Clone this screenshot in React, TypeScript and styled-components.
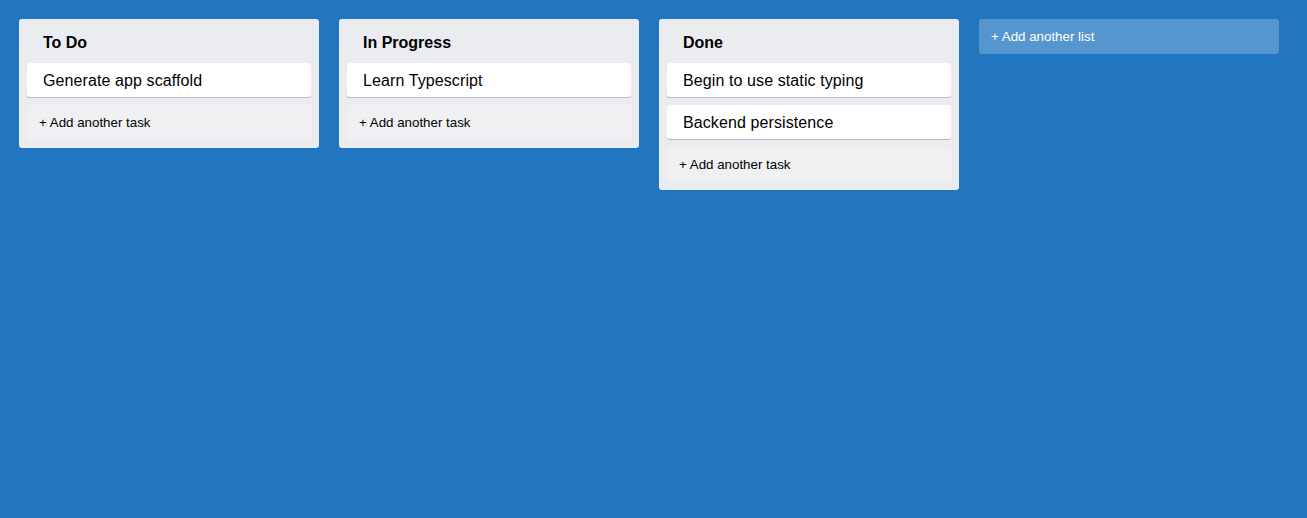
import React from "react";
import styled, { createGlobalStyle } from "styled-components";

const GlobalStyle = createGlobalStyle`
  html, body {
    margin: 0;
    padding: 0;
    height: 100%;
  }
  body {
    font-family: "Liberation Sans", Arial, Helvetica, sans-serif;
    -webkit-font-smoothing: antialiased;
    background: #2276bf;
  }
  #root {
    min-height: 100%;
  }
`;

const AppContainer = styled.div`
  display: flex;
  flex-direction: row;
  align-items: flex-start;
  background-color: #2276bf;
  min-height: 100vh;
  box-sizing: border-box;
  padding: 19px;
  width: 100%;
`;

const ColumnContainer = styled.div`
  background-color: #ebecf0;
  width: 300px;
  min-height: 40px;
  margin-right: 20px;
  border-radius: 3px;
  padding: 8px 8px;
  box-sizing: border-box;
  flex-grow: 0;
  flex-shrink: 0;
`;

const ColumnTitle = styled.div`
  padding: 7px 16px 11px;
  font-weight: bold;
  font-size: 16px;
  line-height: 18px;
  color: #000;
`;

const CardContainer = styled.div`
  background-color: #fff;
  cursor: pointer;
  margin-bottom: 8px;
  padding: 9px 16px 7px;
  max-width: 300px;
  border-radius: 3px;
  box-shadow: #091e4240 0px 1px 0px 0px;
  font-size: 16px;
  line-height: 18px;
  letter-spacing: 0.1px;
  color: #000;
`;

const AddItemButton = styled.button<{ $dark?: boolean }>`
  display: block;
  background-color: #ffffff3d;
  border-radius: 3px;
  border: none;
  color: ${(p) => (p.$dark ? "#000" : "#fff")};
  cursor: pointer;
  max-width: 300px;
  padding: 10px 12px;
  text-align: left;
  width: 100%;
  font-family: "Liberation Sans", Arial, Helvetica, sans-serif;
  font-size: 13.333px;
  line-height: 15px;
  box-sizing: border-box;
`;

const AddListWrapper = styled.div`
  width: 300px;
  flex-shrink: 0;
`;

type Column = { title: string; tasks: string[] };

const columns: Column[] = [
  { title: "To Do", tasks: ["Generate app scaffold"] },
  { title: "In Progress", tasks: ["Learn Typescript"] },
  { title: "Done", tasks: ["Begin to use static typing", "Backend persistence"] },
];

export default function App() {
  return (
    <>
      <GlobalStyle />
      <AppContainer>
        {columns.map((c) => (
          <ColumnContainer key={c.title}>
            <ColumnTitle>{c.title}</ColumnTitle>
            {c.tasks.map((t) => (
              <CardContainer key={t}>{t}</CardContainer>
            ))}
            <AddItemButton $dark>+ Add another task</AddItemButton>
          </ColumnContainer>
        ))}
        <AddListWrapper>
          <AddItemButton>+ Add another list</AddItemButton>
        </AddListWrapper>
      </AppContainer>
    </>
  );
}
